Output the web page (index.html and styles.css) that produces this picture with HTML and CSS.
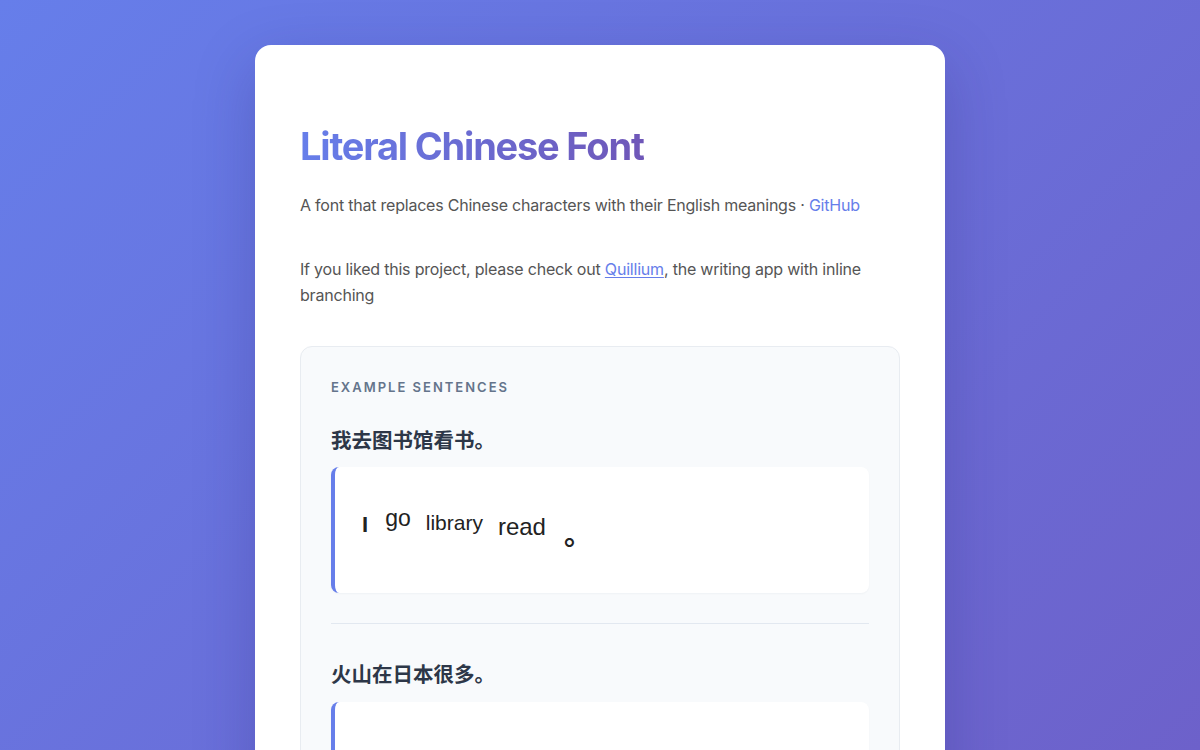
FILE: index.html
```html
<!DOCTYPE html>
<html lang="en">
<head>
<meta charset="utf-8">
<title>Literal Chinese Font</title>
<link rel="stylesheet" href="styles.css">
</head>
<body>
<main class="card">
  <h1 class="title">Literal Chinese Font</h1>
  <p class="subtitle">A font that replaces Chinese characters with their English meanings · <a class="plain-link" href="#">GitHub</a></p>
  <p class="promo">If you liked this project, please check out <a class="under-link" href="#">Quillium</a>, the writing app with inline branching</p>

  <section class="examples">
    <div class="label">Example Sentences</div>

    <div class="example">
      <div class="sentence">我去图书馆看书。</div>
      <div class="render">
        <span class="w w-i">I</span><span class="w w-go">go</span><span class="w w-lib">library</span><span class="w w-read">read</span><span class="w w-stop">。</span>
      </div>
    </div>

    <hr class="divider">

    <div class="example">
      <div class="sentence">火山在日本很多。</div>
      <div class="render render-low">
        <span class="w w-v">fire mountain</span><span class="w w-at">at</span><span class="w w-jp">Japan</span><span class="w w-very">very</span><span class="w w-many">many</span><span class="w w-stop">。</span>
      </div>
    </div>
  </section>
</main>
</body>
</html>
```

FILE: styles.css
```css
html {
  height: 100%;
  background: linear-gradient(135deg, #667eea 0%, #6d61ca 100%);
}
body {
  margin: 0;
  padding: 45px 0 40px;
  font-family: Inter, "Noto Sans", "Noto Sans CJK SC", sans-serif;
  color: #555;
}
.card {
  width: 600px;
  margin: 0 auto;
  padding: 77px 45px 45px;
  background: #fff;
  border-radius: 16px;
  box-shadow: 0 20px 60px rgba(40, 30, 110, 0.25);
}
.title {
  margin: 0;
  font-size: 38px;
  line-height: 48px;
  font-weight: 700;
  letter-spacing: -1.2px;
  background: linear-gradient(90deg, #667eea 0%, #6f57b8 100%);
  -webkit-background-clip: text;
  background-clip: text;
  color: transparent;
  width: max-content;
}
.subtitle {
  margin: 22px 0 0;
  font-size: 16px;
  line-height: 26px;
  letter-spacing: -0.22px;
}
.promo {
  margin: 38px 0 0;
  font-size: 16px;
  line-height: 26px;
  letter-spacing: -0.2px;
}
.plain-link {
  color: #667eea;
  text-decoration: none;
}
.under-link {
  color: #667eea;
  text-decoration: underline;
  text-underline-offset: 2px;
}
.examples {
  margin-top: 38px;
  padding: 30px;
  background: #f8fafc;
  border: 1px solid #e8ecf1;
  border-radius: 12px;
}
.label {
  font-size: 13px;
  line-height: 20px;
  font-weight: 600;
  letter-spacing: 2px;
  text-transform: uppercase;
  color: #64748b;
}
.example {
  margin-top: 27px;
}
.divider + .example {
  margin-top: 34px;
}
.sentence {
  font-family: "Noto Sans CJK SC", sans-serif;
  font-size: 20.5px;
  line-height: 30px;
  font-weight: 700;
  color: #2d3748;
}
.render {
  margin-top: 13px;
  height: 126px;
  box-sizing: border-box;
  padding: 40px 27px 0;
  background: #fff;
  border-left: 4px solid #667eea;
  border-radius: 8px;
  box-shadow: 0 1px 2px rgba(30, 40, 80, 0.04);
  display: flex;
  align-items: flex-start;
  font-family: "Liberation Sans", Arial, sans-serif;
  color: #222;
}
.render-low {
  margin-top: 14px;
  padding-top: 44px;
}
.w {
  display: block;
  line-height: 1;
  white-space: nowrap;
}
.w-i {
  font-size: 22px;
  font-weight: 700;
  margin-top: 7px;
  margin-right: 17px;
}
.w-go {
  font-size: 23px;
  margin-top: 0;
  margin-right: 15px;
}
.w-lib {
  font-size: 21px;
  margin-top: 5px;
  margin-right: 15px;
}
.w-read {
  font-size: 24px;
  margin-top: 8px;
  margin-right: 18px;
}
.w-v {
  font-size: 14px;
  margin-top: 12px;
  margin-right: 14px;
}
.w-at {
  font-size: 22px;
  margin-top: 8px;
  margin-right: 14px;
}
.w-jp {
  font-size: 21px;
  margin-top: 4px;
  margin-right: 14px;
}
.w-very {
  font-size: 22px;
  margin-top: 9px;
  margin-right: 14px;
}
.w-many {
  font-size: 23px;
  margin-top: 7px;
  margin-right: 18px;
}
.w-stop {
  font-family: "Noto Sans CJK SC", sans-serif;
  font-size: 28px;
  font-weight: 700;
  margin-top: 12px;
}
.divider {
  margin: 30px 0 0;
  border: 0;
  border-top: 1px solid #e2e8f0;
}
```
